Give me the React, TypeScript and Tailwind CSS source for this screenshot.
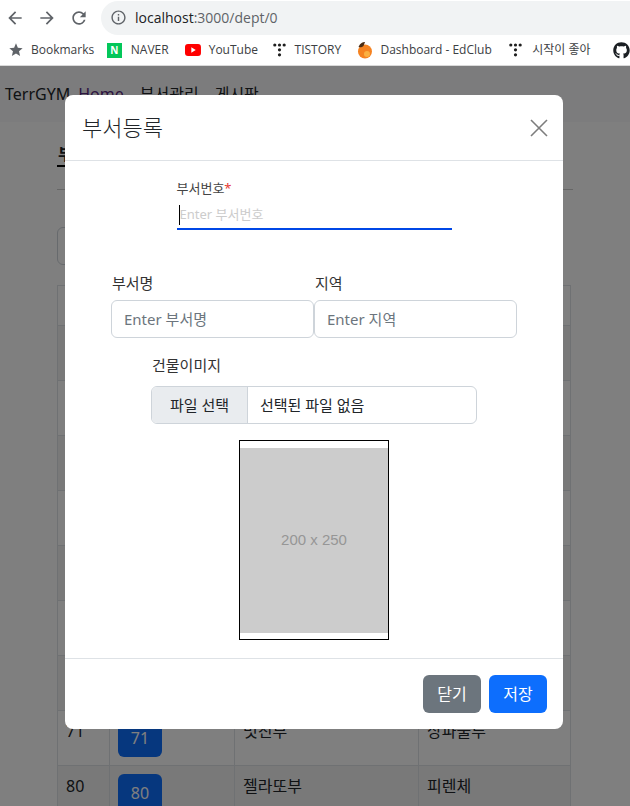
import { FaGithub } from "react-icons/fa";
import { MdArrowBack, MdArrowForward, MdInfoOutline, MdRefresh, MdStar } from "react-icons/md";

const rows = [
    { id: "10", name: "", loc: "" },
    { id: "20", name: "", loc: "" },
    { id: "30", name: "", loc: "" },
    { id: "40", name: "", loc: "" },
    { id: "50", name: "", loc: "" },
    { id: "60", name: "", loc: "" },
    { id: "70", name: "", loc: "" },
    { id: "71", name: "멋진부", loc: "상파울루" },
    { id: "80", name: "젤라또부", loc: "피렌체" },
];

const TistoryIcon = () => (
    <svg width="13" height="14" viewBox="0 0 13 14" fill="#1f1f1f">
        <circle cx="1.8" cy="2" r="1.6" />
        <circle cx="6.5" cy="2" r="1.6" />
        <circle cx="11.2" cy="2" r="1.6" />
        <circle cx="6.5" cy="6.8" r="1.6" />
        <circle cx="6.5" cy="11.8" r="1.6" />
    </svg>
);

const Bookmarks = () => (
    <div className="flex h-[30px] items-center pl-[8px] text-[12px] text-[#3c4043]">
        <MdStar className="text-[#5f6368]" size={16} />
        <span className="ml-[7px] w-[76px]">Bookmarks</span>
        <div className="flex h-[15px] w-[15px] items-center justify-center bg-[#03c75a] text-[10px] font-bold leading-none text-white">
            N
        </div>
        <span className="ml-[9px] w-[54px]">NAVER</span>
        <svg width="16" height="12" viewBox="0 0 16 12">
            <rect width="16" height="12" rx="3" fill="#ff0000" />
            <path d="M6.3 3.3 L10.8 6 L6.3 8.7 Z" fill="#fff" />
        </svg>
        <span className="ml-[8px] w-[64px]">YouTube</span>
        <TistoryIcon />
        <span className="ml-[9px] w-[63px]">TISTORY</span>
        <svg width="16" height="18" viewBox="0 0 16 18">
            <circle cx="8" cy="10.5" r="7" fill="#f58220" />
            <path d="M1.5 6 C3 2 6 1 8 1 L6.5 5 C5 6.5 3 6.5 1.5 6 Z" fill="#4a2b12" />
            <circle cx="10" cy="13" r="3" fill="#fbb040" />
        </svg>
        <span className="ml-[7px] w-[129px]">Dashboard - EdClub</span>
        <TistoryIcon />
        <span className="ml-[10px] w-[81px]">시작이 좋아</span>
        <FaGithub className="text-[#1b1f23]" size={17} />
    </div>
);

const BrowserBar = () => (
    <div className="h-[66px] shrink-0 border-b border-[#d9d9d9] bg-white font-['Open_Sans','Noto_Sans_CJK_KR',sans-serif]">
        <div className="flex h-[35px] items-center">
            <div className="flex w-[101px] items-center gap-[12px] pl-[5px] text-[#5f6368]">
                <MdArrowBack size={20} />
                <MdArrowForward size={20} />
                <MdRefresh size={20} />
            </div>
            <div className="flex h-[34px] flex-1 items-center rounded-l-full bg-[#f1f3f4] pl-[9px] text-[14px]">
                <MdInfoOutline className="text-[#5f6368]" size={17} />
                <span className="ml-[8px] text-[#202124]">localhost</span>
                <span className="text-[#5f6368]">:3000/dept/0</span>
            </div>
        </div>
        <Bookmarks />
    </div>
);

const BackPage = () => (
    <div className="text-[16px] text-[#212529]">
        <nav className="flex h-14 items-center bg-[#f8f9fa] pl-[5px]">
            <span>TerrGYM</span>
            <span className="ml-[8px] text-[#5a2a82]">Home</span>
            <span className="ml-[16px]">부서관리</span>
            <span className="ml-[16px]">게시판</span>
        </nav>
        <div className="px-[57px]">
            <div className="mt-[20px] h-[48px] border-b border-[#cccccc]">
                <span className="border-b-2 border-black pl-px font-bold">부서목록</span>
            </div>
            <div className="mt-[37px] h-[38px] w-[300px] rounded-[6px] border border-[#ced4da]" />
            <table className="mt-[20px] w-[514px] table-fixed border-collapse">
                <thead>
                    <tr className="h-[40px]">
                        <th className="w-[52px] border border-[#dee2e6]" />
                        <th className="w-[125px] border border-[#dee2e6]" />
                        <th className="w-[184px] border border-[#dee2e6]" />
                        <th className="border border-[#dee2e6]" />
                    </tr>
                </thead>
                <tbody>
                    {rows.map((r) => (
                        <tr key={r.id} className="h-[55px] odd:bg-[#f2f2f2]">
                            <td className="border border-[#dee2e6] p-2 align-top">{r.id}</td>
                            <td className="border border-[#dee2e6] p-2 align-top">
                                <div className="flex h-[38px] w-[44px] items-center justify-center rounded-[6px] bg-[#0d6efd] text-white">
                                    {r.id}
                                </div>
                            </td>
                            <td className="border border-[#dee2e6] p-2 align-top">{r.name}</td>
                            <td className="border border-[#dee2e6] p-2 align-top">{r.loc}</td>
                        </tr>
                    ))}
                </tbody>
            </table>
        </div>
    </div>
);

const DeptModal = () => (
    <div className="absolute left-[65px] top-[29px] flex h-[634px] w-[498px] flex-col rounded-[8px] bg-white text-[#212529]">
        <div className="flex h-[66px] shrink-0 items-center justify-between border-b border-[#dee2e6] pl-[17px] pr-[15px]">
            <span className="text-[22px] font-light">부서등록</span>
            <svg width="18" height="18" viewBox="0 0 18 18" stroke="#7d7d7d" strokeWidth="1.6">
                <path d="M1 1 L17 17 M17 1 L1 17" />
            </svg>
        </div>
        <div className="flex flex-1 flex-col items-center pt-[17px]">
            <div className="w-[275px]">
                <div className="text-[13px] leading-[20px] text-[#444444]">
                    부서번호<span className="text-[#e53935]">*</span>
                </div>
                <div className="mt-[4px] flex h-[28px] items-center border-b-2 border-[#0047e6] pl-[2px] text-[13px] text-[#cccccc]">
                    <span className="h-[20px] w-px bg-black" />
                    <span>Enter 부서번호</span>
                </div>
            </div>
            <div className="mt-[41px] flex w-[406px]">
                <div className="w-[203px]">
                    <div className="pl-px text-[15px] leading-[24px] text-[#333333]">부서명</div>
                    <div className="mt-[5px] flex h-[38px] items-center rounded-[6px] border border-[#ced4da] pl-[12px] text-[15px] text-[#6c757d]">
                        Enter 부서명
                    </div>
                </div>
                <div className="w-[203px]">
                    <div className="pl-px text-[15px] leading-[24px] text-[#333333]">지역</div>
                    <div className="mt-[5px] flex h-[38px] items-center rounded-[6px] border border-[#ced4da] pl-[12px] text-[15px] text-[#6c757d]">
                        Enter 지역
                    </div>
                </div>
            </div>
            <div className="mt-[15px] w-[326px]">
                <div className="pl-px text-[15px] leading-[24px] text-[#333333]">건물이미지</div>
                <div className="mt-[9px] flex h-[38px] items-center overflow-hidden rounded-[6px] border border-[#ced4da] text-[15px]">
                    <div className="flex h-full w-[96px] items-center justify-center border-r border-[#ced4da] bg-[#e9ecef]">
                        파일 선택
                    </div>
                    <span className="ml-[12px]">선택된 파일 없음</span>
                </div>
            </div>
            <div className="mt-[16px] flex h-[200px] w-[150px] flex-col justify-center border border-black">
                <div className="flex h-[185px] items-center justify-center bg-[#cccccc] font-['Liberation_Sans',sans-serif] text-[15px] text-[#969696]">
                    200 x 250
                </div>
            </div>
        </div>
        <div className="flex h-[71px] shrink-0 items-center justify-end gap-[8px] border-t border-[#dee2e6] pr-[16px] text-white">
            <div className="flex h-[38px] w-[58px] items-center justify-center rounded-[6px] bg-[#6c757d]">닫기</div>
            <div className="flex h-[38px] w-[58px] items-center justify-center rounded-[6px] bg-[#0d6efd]">저장</div>
        </div>
    </div>
);

export default function App() {
    return (
        <div className="flex h-[806px] w-[630px] flex-col overflow-hidden bg-white font-['Noto_Sans','Noto_Sans_CJK_KR',sans-serif]">
            <BrowserBar />
            <div className="relative flex-1 overflow-hidden">
                <BackPage />
                <div className="absolute inset-0 bg-black/50" />
                <DeptModal />
            </div>
        </div>
    );
}
